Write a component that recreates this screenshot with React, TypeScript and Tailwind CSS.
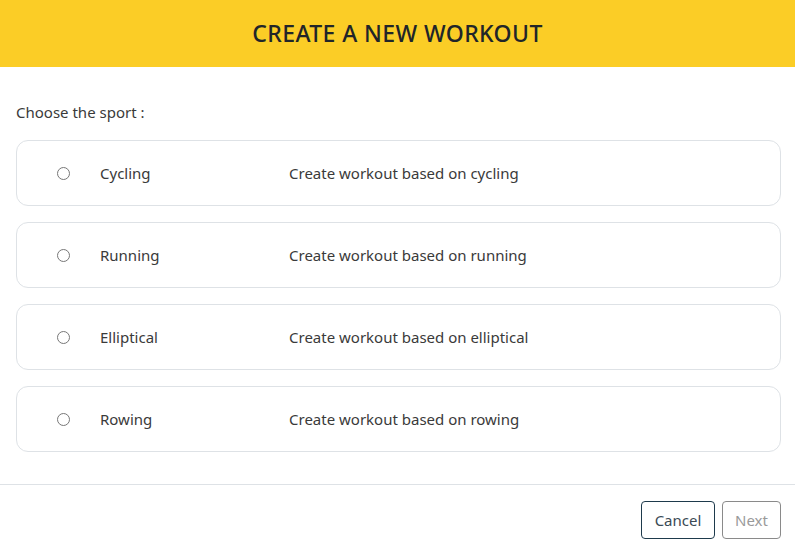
const sports = [
  { name: "Cycling", desc: "Create workout based on cycling" },
  { name: "Running", desc: "Create workout based on running" },
  { name: "Elliptical", desc: "Create workout based on elliptical" },
  { name: "Rowing", desc: "Create workout based on rowing" },
];

export default function App() {
  return (
    <div
      className="w-[795px] h-[553px] bg-white flex flex-col text-[#212529]"
      style={{ fontFamily: '"Noto Sans", "Open Sans", sans-serif' }}
    >
      <header className="h-[67px] bg-[#fbcd26] flex items-center justify-center">
        <h1 className="text-[23px] font-medium tracking-[0.4px] text-[#212529]">
          CREATE A NEW WORKOUT
        </h1>
      </header>

      <main className="pl-4 pr-[14px] pt-[34px] flex-1">
        <p className="text-[15px] leading-[22px] text-[#3a3a3a] mb-[17px]">Choose the sport :</p>
        <div className="flex flex-col gap-4">
          {sports.map((s) => (
            <label
              key={s.name}
              className="h-[66px] border border-[#dee2e6] rounded-[12px] flex items-center text-[15px] text-[#3a3a3a]"
            >
              <span className="ml-[40px] w-[13px] h-[13px] rounded-full border border-[#777] bg-white" />
              <span className="ml-[30px] w-[189px]">{s.name}</span>
              <span>{s.desc}</span>
            </label>
          ))}
        </div>
      </main>

      <footer className="border-t border-[#dee2e6] h-[69px] flex items-center justify-end gap-[7px] pl-4 pr-[14px] pt-[2px]">
        <button className="h-[38px] w-[74px] border border-[#1e3a4c] rounded-[4px] text-[15px] text-[#3b4a55]">
          Cancel
        </button>
        <button className="h-[38px] w-[59px] border border-[#8a8a8a] rounded-[4px] text-[15px] text-[#9a9a9a]">
          Next
        </button>
      </footer>
    </div>
  );
}
